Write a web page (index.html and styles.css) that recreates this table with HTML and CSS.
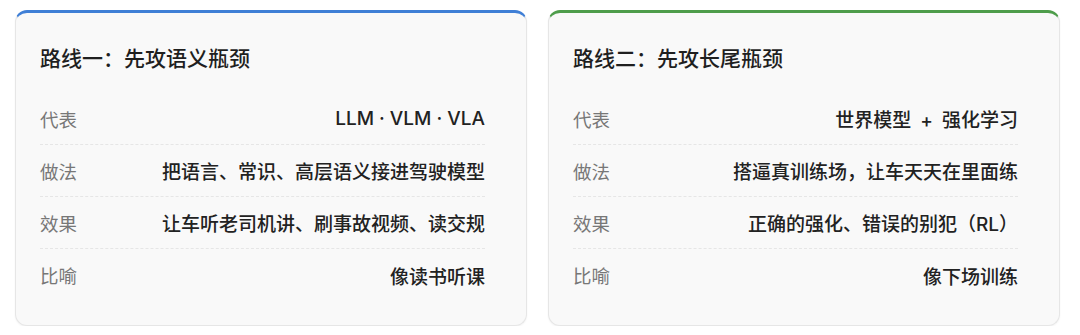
FILE: index.html
```html
<!DOCTYPE html>
<html lang="zh-CN">
<head>
<meta charset="utf-8">
<title>两条路线</title>
<link rel="stylesheet" href="styles.css">
</head>
<body>
<div class="routes">
  <section class="card card-blue">
    <h2 class="card-title">路线一：先攻语义瓶颈</h2>
    <div class="row"><span class="label">代表</span><span class="value">LLM · VLM · VLA</span></div>
    <div class="row"><span class="label">做法</span><span class="value">把语言、常识、高层语义接进驾驶模型</span></div>
    <div class="row"><span class="label">效果</span><span class="value">让车听老司机讲、刷事故视频、读交规</span></div>
    <div class="row"><span class="label">比喻</span><span class="value">像读书听课</span></div>
  </section>
  <section class="card card-green">
    <h2 class="card-title">路线二：先攻长尾瓶颈</h2>
    <div class="row"><span class="label">代表</span><span class="value">世界模型<span class="plus">+</span>强化学习</span></div>
    <div class="row"><span class="label">做法</span><span class="value">搭逼真训练场，让车天天在里面练</span></div>
    <div class="row"><span class="label">效果</span><span class="value">正确的强化、错误的别犯（RL）</span></div>
    <div class="row"><span class="label">比喻</span><span class="value">像下场训练</span></div>
  </section>
</div>
</body>
</html>
```

FILE: styles.css
```css
* { box-sizing: border-box; }
html, body { margin: 0; padding: 0; background: #ffffff; }
body {
  font-family: "Inter", "Noto Sans CJK SC", "Noto Sans", sans-serif;
  color: #222222;
}
.routes {
  display: grid;
  grid-template-columns: 512px 512px;
  column-gap: 21px;
  padding: 10px 0 0 15px;
}
.card {
  background: #f9f9f9;
  border: 1px solid #e6e6e6;
  border-top-width: 3px;
  border-radius: 12px;
  padding: 32px 41px 24px 24px;
  box-shadow: 0 1px 2px rgba(0, 0, 0, 0.05);
}
.card-blue { border-top-color: #3f7fd6; }
.card-green { border-top-color: #4e9d4b; }
.card-title {
  margin: 0 0 20px;
  font-size: 21px;
  line-height: 28px;
  font-weight: 500;
  color: #1f1f1f;
}
.row {
  display: flex;
  justify-content: space-between;
  align-items: center;
  height: 52px;
  border-bottom: 1px dashed #e6e6e6;
}
.row:last-child { border-bottom: none; }
.label {
  font-size: 18.5px;
  color: #777777;
  font-weight: 400;
}
.value {
  font-size: 19px;
  font-weight: 500;
  color: #222222;
}
.plus {
  margin: 0 9px;
}
```
